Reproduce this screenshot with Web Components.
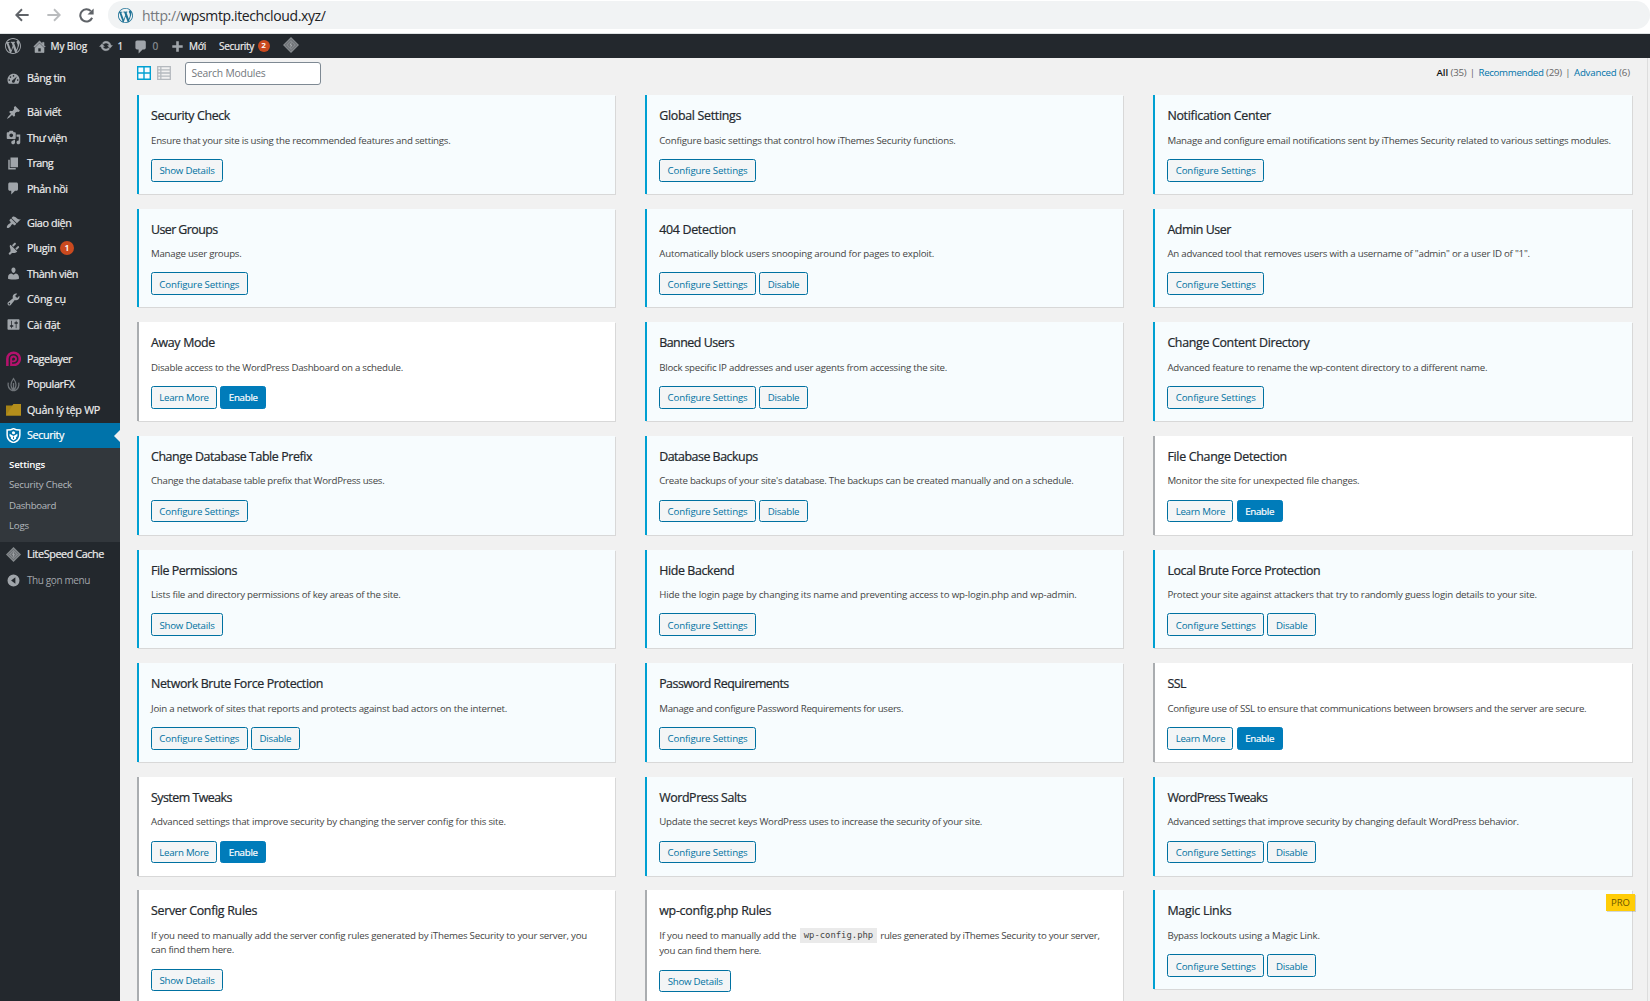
<!DOCTYPE html>
<html lang="vi">
<head>
<meta charset="utf-8">
<title>Security</title>
<style>
html,body{margin:0;height:100%;overflow:hidden;background:#f1f1f1;font-family:"Open Sans","Noto Sans",sans-serif}
</style>
</head>
<body>
<wp-page></wp-page>
<script>
const define=(name,html,setup)=>customElements.define(name,class extends HTMLElement{
  connectedCallback(){
    if(this.shadowRoot)return;
    const root=this.attachShadow({mode:'open'});
    root.innerHTML=typeof html==='function'?html(this):html;
    if(setup)setup(this,root);
  }
});

/* One line of text tracked to an exact advance width */
define('fit-text','<style>:host{display:inline-block;white-space:nowrap;flex:none}</style><slot></slot>',el=>{
  const w=parseFloat(el.getAttribute('w'));
  if(!w)return;
  const r=document.createRange();r.selectNodeContents(el);
  const n=r.getBoundingClientRect().width;
  el.style.letterSpacing=((w-n)/Math.max(1,el.textContent.length)).toFixed(3)+'px';
  el.style.width=w+'px';
});

const P={
wordpress:'<path d="M20 10c0-5.51-4.49-10-10-10C4.48 0 0 4.49 0 10c0 5.52 4.48 10 10 10 5.51 0 10-4.48 10-10zM7.78 15.37L4.37 6.22c.55-.02 1.17-.08 1.17-.08.5-.06.44-1.13-.06-1.11 0 0-1.45.11-2.37.11-.18 0-.37 0-.58-.01C4.12 2.69 6.87 1.11 10 1.11c2.33 0 4.45.87 6.05 2.34-.68-.11-1.65.39-1.65 1.58 0 .74.45 1.36.9 2.1.35.61.55 1.36.55 2.46 0 1.49-1.4 5-1.4 5l-3.03-8.37c.54-.02.82-.17.82-.17.5-.05.44-1.25-.06-1.22 0 0-1.44.12-2.38.12-.87 0-2.33-.12-2.33-.12-.5-.03-.56 1.2-.06 1.22l.92.08 1.26 3.41zM17.41 10c.24-.64.74-1.87.43-4.25.7 1.29 1.05 2.71 1.05 4.25 0 3.29-1.73 6.24-4.4 7.78.97-2.59 1.94-5.2 2.92-7.78zM6.1 18.09C3.12 16.65 1.11 13.53 1.11 10c0-1.3.23-2.48.72-3.59C3.25 10.3 4.67 14.2 6.1 18.09zm4.03-6.63l2.58 6.98c-.86.29-1.76.45-2.71.45-.79 0-1.57-.11-2.29-.33.81-2.38 1.62-4.74 2.42-7.1z"/>',
home:'<path d="M16 8.5l1.53 1.53-1.06 1.06L10 4.6l-6.47 6.49-1.06-1.06L10 2.5l4 4v-2h2v4zm-6-2.46l6 5.99V18H4v-5.97zM12 17v-5H8v5h4z" stroke="currentColor" stroke-width=".8"/>',
update:'<path d="M10.2 3.28c3.53 0 6.43 2.61 6.92 6h2.08l-3.5 4-3.5-4h2.32c-.45-1.97-2.21-3.45-4.32-3.45-1.45 0-2.73.71-3.54 1.78L4.95 5.66C6.23 4.2 8.11 3.28 10.2 3.28zm-.4 13.44c-3.52 0-6.43-2.61-6.92-6H.8l3.5-4c1.17 1.33 2.33 2.67 3.5 4H5.48c.45 1.97 2.21 3.45 4.32 3.45 1.45 0 2.73-.71 3.54-1.78l1.71 1.95c-1.28 1.46-3.15 2.38-5.25 2.38z" stroke="currentColor" stroke-width=".6"/>',
comment:'<path d="M5 2h9c1.1 0 2 .9 2 2v7c0 1.1-.9 2-2 2h-2l-5 5v-5H5c-1.1 0-2-.9-2-2V4c0-1.1.9-2 2-2z"/>',
plus:'<path d="M18 8v4h-6v6H8v-6H2V8h6V2h4v6z"/>',
dashboard:'<path fill-rule="evenodd" d="M3.760 17h12.480c1.340-1.630 2.010-3.820 1.740-6.230-.4-3.570-3.220-6.470-6.790-6.950C6.280 3.170 2 6.990 2 11.900c0 1.940.66 3.730 1.760 5.100zM10 5.400a1.100 1.100 0 1 1 0 2.200 1.100 1.100 0 0 1 0-2.200zM6 7a1.100 1.100 0 1 1 0 2.200A1.100 1.100 0 0 1 6 7zM4.400 11a1.100 1.100 0 1 1 0 2.200 1.100 1.100 0 0 1 0-2.200zm11.200 0a1.100 1.100 0 1 1 0 2.200 1.100 1.100 0 0 1 0-2.200zM14.500 7.200l-2.700 6.300a2 2 0 1 1-2.600-1.600z"/>',
post:'<path d="M10.440 3.020l1.820-1.820 6.360 6.350-1.830 1.820c-1.050-.68-2.480-.57-3.410.36l-.75.75c-.92.93-1.040 2.350-.35 3.410l-1.830 1.820-2.410-2.410-2.800 2.790c-.42.42-3.380 2.710-3.800 2.290s1.860-3.390 2.280-3.810l2.790-2.790L4.100 9.360l1.830-1.820c1.050.69 2.480.57 3.400-.36l.75-.75c.93-.92 1.050-2.350.36-3.410z"/>',
media:'<path d="M13 11V4c0-.55-.45-1-1-1h-1.670L9 1H5L3.670 3H2c-.55 0-1 .45-1 1v7c0 .55.45 1 1 1h10c.55 0 1-.45 1-1zM7 4.500c1.380 0 2.500 1.120 2.500 2.500S8.380 9.500 7 9.500 4.500 8.380 4.500 7 5.620 4.500 7 4.500zM14 6h5v10.500c0 1.380-1.120 2.500-2.500 2.500S14 17.880 14 16.500s1.120-2.500 2.500-2.500c.17 0 .34.020.5.050V9h-3V6zm-4 8.050V13h2v3.500c0 1.380-1.120 2.500-2.500 2.500S7 17.880 7 16.500 8.120 14 9.500 14c.17 0 .34.020.5.050z"/>',
page:'<path d="M6 15V2h10v13H6zm-1 1h8v2H3V5h2v11z"/>',
appearance:'<path d="M14.480 11.060L7.410 3.990l1.500-1.500c.5-.56 2.300-.47 3.510.32 1.210.8 1.430 1.280 2.910 2.100 1.180.64 2.450 1.260 4.450.85zm-.71.71L6.700 4.700 4.930 6.470c-.39.39-.39 1.020 0 1.410l1.060 1.060c.39.39.39 1.030 0 1.420-.6.6-1.430 1.110-2.210 1.690-.35.26-.7.53-1.010.84C1.430 14.230.4 16.080 1.400 17.070c.99 1 2.840-.03 4.180-1.360.31-.31.58-.66.85-1.020.57-.78 1.080-1.610 1.690-2.210.39-.39 1.020-.39 1.410 0l1.060 1.060c.39.39 1.020.39 1.410 0z"/>',
plugins:'<path d="M13.110 4.360L9.870 7.600 8 5.730l3.240-3.240c.35-.34 1.050-.2 1.560.32.52.51.66 1.210.31 1.550zm-8 1.770l.91-1.120 9.010 9.010-1.190.84c-.71.71-2.630 1.160-3.820 1.160H8l-2.120 2.100c-.39.39-1.020.39-1.410 0l-.59-.59c-.39-.39-.39-1.020 0-1.410L6 14v-2.190c0-1.200-1.600-4.970-.89-5.680zm7.260 3.970l3.240-3.240c.34-.35 1.040-.21 1.550.31.52.51.66 1.210.31 1.550l-3.240 3.250z"/>',
users:'<path d="M10 9.250c-2.270 0-2.730-3.440-2.730-3.440C7 4.020 7.820 2 9.970 2c2.160 0 2.980 2.020 2.710 3.810 0 0-.41 3.440-2.680 3.440zm0 2.570L12.720 10c2.390 0 4.520 2.330 4.520 4.530v2.490s-3.650 1.130-7.240 1.130c-3.650 0-7.240-1.130-7.240-1.130v-2.490c0-2.250 1.940-4.480 4.470-4.480z"/>',
tools:'<path d="M16.680 9.770c-1.340 1.340-3.300 1.670-4.950.99l-5.410 6.520c-.99.99-2.590.99-3.580 0s-.99-2.590 0-3.570l6.520-5.420c-.68-1.650-.35-3.610.99-4.950 1.280-1.280 3.120-1.620 4.720-1.060l-2.890 2.890 2.820 2.820 2.860-2.870c.53 1.580.18 3.390-1.080 4.650zM3.810 16.210c.4.39 1.040.39 1.430 0 .4-.4.4-1.040 0-1.430-.39-.4-1.030-.4-1.430 0-.39.39-.39 1.030 0 1.430z"/>',
settings:'<path d="M18 16V4c0-.55-.45-1-1-1H3c-.55 0-1 .45-1 1v12c0 .55.45 1 1 1h14c.55 0 1-.45 1-1zM8 11h1c.55 0 1 .45 1 1s-.45 1-1 1H8v1.500c0 .28-.22.5-.5.5s-.5-.22-.5-.5V13H6c-.55 0-1-.45-1-1s.45-1 1-1h1V5.500c0-.28.22-.5.5-.5s.5.22.5.5V11zm5-2h-1c-.55 0-1-.45-1-1s.45-1 1-1h1V5.500c0-.28.22-.5.5-.5s.5.22.5.5V7h1c.55 0 1 .45 1 1s-.45 1-1 1h-1v5.500c0 .28-.22.5-.5.5s-.5-.22-.5-.5V9z"/>',
pagelayer:'<path fill="none" stroke="#b5126d" stroke-width="3.400" d="M1.800 20V10.500a8.300 8.300 0 1 1 8.300 8.300H8"/><path fill="none" stroke="#b5126d" stroke-width="2.600" d="M6.800 20V10.500a3.300 3.300 0 1 1 3.300 3.300H7"/>',
popularfx:'<g fill="none" stroke="#6f7479" stroke-width="1.700"><path d="M10 2c-5 7-4 12 0 16 4-4 5-9 0-16zM3 7.500c-1 5 1 9 6 11M17 7.500c1 5-1 9-6 11M10 8v9"/></g>',
folder:'<path d="M0 4.500L8.500 4.500 10.500 2.500H20V18H0z" fill="#a78316"/><path d="M0 18L10 2.800H20V18z" fill="#b48e1c"/>',
shield:'<path d="M10 .8c2.500 1.600 5.300 2 8.500 2v6.400c0 5-3.500 8.600-8.500 10.400-5-1.800-8.500-5.400-8.500-10.400V2.800c3.200 0 6-.4 8.500-2z" fill="none" stroke="#fff" stroke-width="2"/><circle cx="10" cy="6.300" r="2.100" fill="#fff"/><path d="M4.800 7.600L10 10.600l5.200-3v3.300l-1.700 1v2.400L10 16.800l-3.500-2.500v-2.400l-1.700-1z" fill="#fff"/><path d="M9.400 11.500h1.200v3H9.400z" fill="#0073aa"/>',
diamond:'<path d="M10 0l10 10-10 10L0 10z" fill="#85898d"/><path d="M10 3l7 7-7 7-7-7z" fill="none" stroke="#5b5f63" stroke-width="1"/><path d="M10 6l4 4-4 4-4-4z" fill="#6a6e72"/><path d="M10.800 5.800L8 10.300h1.700L9 14.200l3-4.600h-1.800z" fill="#a9adb0"/>',
collapse:'<path fill-rule="evenodd" d="M10 2a8 8 0 1 1 0 16 8 8 0 0 1 0-16zM12.500 5.800v8.400L6.800 10z"/>',
grid:'<path fill="#f8fcff" d="M1 1h18v18H1z"/><path fill="none" stroke="#00a0d2" stroke-width="2" d="M1 1h18v18H1zM10 1v18M1 10h18"/>',
list:'<path fill="none" stroke="#b4b9be" stroke-width="1.800" d="M1 1h18v18H1zM5.500 1v18M1 5.500h18M1 10h18M1 14.500h18"/>',
back:'<path fill="none" stroke="#5f6368" stroke-width="2.700" d="M19.500 10H2.500M10 1.800L1.800 10l8.200 8.200"/>',
forward:'<path fill="none" stroke="#babcbe" stroke-width="2.700" d="M.5 10h17M10 1.800l8.200 8.200-8.200 8.200"/>',
reload:'<path fill="none" stroke="#5f6368" stroke-width="2.700" d="M17.500 13a8.200 8.200 0 1 1-1.600-8.800"/><path fill="#5f6368" d="M19.500.5v8.200h-8.200z"/>'
};
define('wp-icon',el=>`<style>:host{display:block;flex:none;width:${el.getAttribute('size')||15}px;height:${el.getAttribute('size')||15}px;color:#a0a5aa}svg{display:block;width:100%;height:100%;fill:currentColor}</style><svg viewBox="0 0 20 20">${P[el.getAttribute('name')]}</svg>`);

define('count-badge','<style>:host{display:flex;align-items:center;justify-content:center;flex:none;width:var(--d,14px);height:var(--d,14px);border-radius:50%;background:#ca4a1f;color:#fff;font-size:8px;font-weight:600;line-height:1}</style><slot></slot>');

define('browser-bar',`<style>
:host{display:flex;align-items:center;background:#fff;border-bottom:1px solid #dfe3e4;box-sizing:border-box;height:34px;padding:0 0 3px 15px;flex:none}
.pill{display:flex;align-items:center;flex:1;height:28px;margin:0 0 0 14.500px;padding-left:10px;border-radius:14px;background:#f1f3f4;font-size:14px;color:#202124}
.pill wp-icon{margin-right:9px}
.g{color:#75797d}
</style>
<wp-icon name="back" size="14"></wp-icon><wp-icon name="forward" size="14" style="margin-left:18px"></wp-icon><wp-icon name="reload" size="15" style="margin-left:17.500px"></wp-icon>
<div class="pill"><wp-icon name="wordpress" size="15" style="color:#1f7296"></wp-icon><fit-text w="183.500"><span class="g">http://</span>wpsmtp.itechcloud.xyz/</fit-text></div>`);

define('admin-bar',`<style>
:host{display:flex;align-items:center;height:24px;background:#23282d;color:#eee;font-size:10px;-webkit-text-stroke:.2px;line-height:24px;padding-left:5px;flex:none}
</style>
<wp-icon name="wordpress" size="16" style="margin-right:10.500px"></wp-icon>
<wp-icon name="home" size="15" style="margin-right:4px"></wp-icon><fit-text w="36.500">My Blog</fit-text>
<wp-icon name="update" size="14" style="margin:0 5px 0 11.500px"></wp-icon><fit-text w="5">1</fit-text>
<wp-icon name="comment" size="16" style="margin:1px 4px 0 10px"></wp-icon><fit-text w="6" style="color:#8c9195">0</fit-text>
<wp-icon name="plus" size="13" style="margin:0 5.500px 0 12px"></wp-icon><fit-text w="17">Mới</fit-text>
<fit-text w="35" style="margin-left:13px">Security</fit-text>
<count-badge style="--d:12.500px;margin-left:3.500px;font-size:7.500px">2</count-badge>
<wp-icon name="diamond" size="16" style="margin:-2px 0 0 12.500px"></wp-icon>`);

define('menu-item',`<style>
:host{display:flex;align-items:center;height:25.500px;padding:0 0 1px 6px;color:#eee;font-size:10.800px;-webkit-text-stroke:.2px;line-height:24px;box-sizing:border-box;position:relative;flex:none}
:host([gap]){margin-top:8.500px}
:host([muted]){color:#a0a5aa;font-size:10px;-webkit-text-stroke:0;padding-bottom:.5px}
:host([current]){background:#0073aa;color:#fff;height:25px;padding-bottom:1px}
:host([current])::after{content:"";position:absolute;right:0;top:6.500px;border:6px solid transparent;border-left:0;border-right-color:#f1f1f1}
::slotted(wp-icon){margin-right:6px}
::slotted(count-badge){margin-left:4px}
</style><slot></slot>`);

const menu=[['dashboard','Bảng tin',38.5],['post','Bài viết',34,1],['media','Thư viện',40],['page','Trang',26],['comment','Phản hồi',40.5],
['appearance','Giao diện',44.5,1],['plugins','Plugin',29],['users','Thành viên',51],['tools','Công cụ',39],['settings','Cài đặt',33],
['pagelayer','Pagelayer',45,1],['popularfx','PopularFX',47.5],['folder','Quản lý tệp WP',73],['shield','Security',37]];
define('side-menu',`<style>
:host{display:flex;flex-direction:column;width:120px;flex:none;background:#23282d;padding-top:8px;box-sizing:border-box}
.sub{background:#32373c;height:94px;padding:6.500px 0 0 9px;box-sizing:border-box;display:flex;flex-direction:column;color:#b4b9be;font-size:9.700px;line-height:20.600px;flex:none}
.sub b{color:#fff;font-weight:600}
</style>
${menu.map(([i,t,w,g])=>`<menu-item ${g?'gap':''} ${i==='shield'?'current':''}><wp-icon name="${i}"></wp-icon><fit-text w="${w}">${t}</fit-text>${t==='Plugin'?'<count-badge>1</count-badge>':''}</menu-item>`).join('')}
<div class="sub"><b><fit-text w="36">Settings</fit-text></b><fit-text w="63">Security Check</fit-text><fit-text w="47">Dashboard</fit-text><fit-text w="20">Logs</fit-text></div>
<menu-item><wp-icon name="diamond"></wp-icon><fit-text w="77">LiteSpeed Cache</fit-text></menu-item>
<menu-item muted><wp-icon name="collapse"></wp-icon><fit-text w="63">Thu gọn menu</fit-text></menu-item>`);

define('module-toolbar',`<style>
:host{display:flex;align-items:center;height:22.500px;margin-top:4px;font-size:9.700px;line-height:14px}
.search{display:flex;align-items:center;box-sizing:border-box;width:136px;height:23px;margin-left:14px;padding-left:5.500px;background:#fff;border:1px solid #7e8993;border-radius:3px;color:#72777c;font-size:10.300px}
.filters{display:flex;margin-left:auto;margin-right:1px;color:#666}
a{color:#0073aa}b{color:#111;font-weight:600}
i{font-style:normal;width:12px;text-align:center}
</style>
<wp-icon name="grid" size="14"></wp-icon><wp-icon name="list" size="14" style="margin-left:6px"></wp-icon>
<div class="search"><fit-text w="74">Search Modules</fit-text></div>
<div class="filters"><b><fit-text w="11.500">All</fit-text></b><fit-text w="16" style="margin-left:2.500px">(35)</fit-text><i>|</i><a><fit-text w="65">Recommended</fit-text></a><fit-text w="16" style="margin-left:2.500px">(29)</fit-text><i>|</i><a><fit-text w="42.500">Advanced</fit-text></a><fit-text w="11" style="margin-left:2.500px">(6)</fit-text></div>`);

const BW={'Show Details':[72,55],'Configure Settings':[96.7,80],'Disable':[48.7,31.5],'Learn More':[66,49.5],'Enable':[46,29]};
define('wp-button',el=>{const t=el.getAttribute('label');return `<style>
:host{display:flex;align-items:center;justify-content:center;box-sizing:border-box;width:${BW[t][0]}px;height:22.700px;border:1px solid #0071a1;border-radius:2.500px;background:#f3f5f6;color:#0071a1;font-size:9.700px;line-height:14px;padding-top:2px}
:host([label="Enable"]){background:#007cba;border-color:#007cba;color:#fff;-webkit-text-stroke:.2px}
</style><fit-text w="${BW[t][1]}">${t}</fit-text>`});

define('module-card',`<style>
:host{display:block;box-sizing:border-box;position:relative;min-height:98.700px;padding:12px;background:#f7fcfe;border-left:2px solid #00a0d2;box-shadow:1px 1px 0 rgba(0,0,0,.1);color:#444}
:host([off]){background:#fff;border-left-color:#aaadb0}
h3{margin:0 0 9.500px;font-size:12.400px;line-height:17px;font-weight:400;-webkit-text-stroke:.22px;color:#23282d;height:17px}
.desc{font-size:9.700px;line-height:14.250px}
.acts{display:flex;gap:3.300px;margin-top:11.100px}
</style><slot name="badge"></slot><h3><slot name="title"></slot></h3><div class="desc"><slot></slot></div><div class="acts"><slot name="actions"></slot></div>`);

define('pro-badge','<style>:host{position:absolute;right:-3px;top:4px;width:28.500px;height:17px;display:flex;align-items:center;justify-content:center;background:#ffcd08;color:#6b5500;font-size:9.500px;line-height:19px;box-shadow:1px 1px 0 rgba(0,0,0,.15)}</style><slot></slot>');

define('desc-line','<style>:host{display:flex;height:14.250px;white-space:nowrap}:host([tall]){height:15.300px}::slotted(code){font:8.900px/15px "DejaVu Sans Mono",monospace;background:#eaeaea;height:15px;padding:0 3.500px;margin:-1px 3.500px 0 4px}</style><slot></slot>');

const C='Configure Settings',S='Show Details',D='Disable',L='Learn More',E='Enable';
const one=(t,w)=>`<desc-line><fit-text w="${w}">${t}</fit-text></desc-line>`;
const mods=[
['Security Check',79,one('Ensure that your site is using the recommended features and settings.',299.5),[S]],
['Global Settings',82,one('Configure basic settings that control how iThemes Security functions.',296.5),[C]],
['Notification Center',103.5,one('Manage and configure email notifications sent by iThemes Security related to various settings modules.',443.5),[C]],
['User Groups',66.5,one('Manage user groups.',90.5),[C]],
['404 Detection',76.5,one('Automatically block users snooping around for pages to exploit.',275),[C,D]],
['Admin User',63.5,one('An advanced tool that removes users with a username of "admin" or a user ID of "1".',362.5),[C]],
['Away Mode',64,one('Disable access to the WordPress Dashboard on a schedule.',252),[L,E]],
['Banned Users',75,one('Block specific IP addresses and user agents from accessing the site.',288),[C,D]],
['Change Content Directory',142,one('Advanced feature to rename the wp-content directory to a different name.',320),[C]],
['Change Database Table Prefix',161,one('Change the database table prefix that WordPress uses.',233.5),[C]],
['Database Backups',98.5,one('Create backups of your site\'s database. The backups can be created manually and on a schedule.',414.5),[C,D]],
['File Change Detection',119.5,one('Monitor the site for unexpected file changes.',192),[L,E]],
['File Permissions',86,one('Lists file and directory permissions of key areas of the site.',249.5),[S]],
['Hide Backend',75,one('Hide the login page by changing its name and preventing access to wp-login.php and wp-admin.',417.5),[C]],
['Local Brute Force Protection',153,one('Protect your site against attackers that try to randomly guess login details to your site.',369.5),[C,D]],
['Network Brute Force Protection',172,one('Join a network of sites that reports and protects against bad actors on the internet.',356),[C,D]],
['Password Requirements',129.5,one('Manage and configure Password Requirements for users.',244),[C]],
['SSL',18.5,one('Configure use of SSL to ensure that communications between browsers and the server are secure.',419),[L,E]],
['System Tweaks',81,one('Advanced settings that improve security by changing the server config for this site.',355),[L,E]],
['WordPress Salts',87,one('Update the secret keys WordPress uses to increase the security of your site.',323),[C]],
['WordPress Tweaks',100,one('Advanced settings that improve security by changing default WordPress behavior.',351.5),[C,D]],
['Server Config Rules',106,one('If you need to manually add the server config rules generated by iThemes Security to your server, you',436)+one('can find them here.',83),[S],'off'],
['wp-config.php Rules',112,'<desc-line tall><fit-text w="137">If you need to manually add the</fit-text><code><fit-text w="69.500">wp-config.php</fit-text></code><fit-text w="219.500">rules generated by iThemes Security to your server,</fit-text></desc-line>'+one('you can find them here.',102),[S],'off'],
['Magic Links',64,one('Bypass lockouts using a Magic Link.',152.5),[C,D],'','PRO']];
define('module-grid',`<style>:host{display:grid;grid-template-columns:repeat(3,478.300px);column-gap:29.900px;row-gap:15px;grid-auto-rows:98.650px;margin-top:10.500px;align-items:start}</style>
${mods.map(([t,w,d,a,off,pro])=>`<module-card ${off||a.includes(E)?'off':''}>${pro?`<pro-badge slot="badge">${pro}</pro-badge>`:''}<fit-text slot="title" w="${w}">${t}</fit-text>${d}${a.map(b=>`<wp-button slot="actions" label="${b}"></wp-button>`).join('')}</module-card>`).join('')}`);

define('wp-page',`<style>
:host{display:flex;flex-direction:column;width:1650px;height:1001px;overflow:hidden}
.body{display:flex;flex:1;min-height:0}
main{flex:1;min-width:0;padding-left:17px;padding-right:16px;margin-right:2px;border-right:1px solid #ddd;overflow:hidden}
</style>
<browser-bar></browser-bar><admin-bar></admin-bar>
<div class="body"><side-menu></side-menu><main><module-toolbar></module-toolbar><module-grid></module-grid></main></div>`);
</script>
</body>
</html>
